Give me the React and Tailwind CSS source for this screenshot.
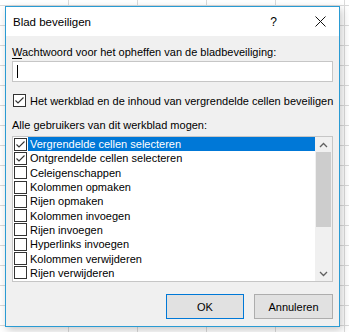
import React from "react";

const items = [
  ["Vergrendelde cellen selecteren", true],
  ["Ontgrendelde cellen selecteren", true],
  ["Celeigenschappen", false],
  ["Kolommen opmaken", false],
  ["Rijen opmaken", false],
  ["Kolommen invoegen", false],
  ["Rijen invoegen", false],
  ["Hyperlinks invoegen", false],
  ["Kolommen verwijderen", false],
  ["Rijen verwijderen", false],
];

function Check({ checked }) {
  return (
    <div className="w-[13px] h-[13px] shrink-0 border border-[#333333] bg-white flex items-center justify-center">
      {checked && (
        <svg width="11" height="11" viewBox="0 0 11 11">
          <polyline points="1.5,5.5 4,8 9.5,2.5" fill="none" stroke="#333333" strokeWidth="1.1" />
        </svg>
      )}
    </div>
  );
}

export default function App() {
  return (
    <div
      className="relative w-[349px] h-[332px] overflow-hidden bg-white bg-[linear-gradient(to_right,#dadada_1px,transparent_1px),linear-gradient(to_bottom,#dadada_1px,transparent_1px)] bg-[length:69px_20px] bg-[position:-1px_5px]"
      style={{ fontFamily: '"Liberation Sans", Arial, sans-serif' }}
    >
      <div className="absolute left-[5px] top-[6px] w-[335px] h-[321px] border border-[#2a9bd3] bg-[#f0f0f0] shadow-[2px_3px_8px_rgba(0,0,0,0.22)] flex flex-col text-[11px] leading-[14px] text-black">
        {/* title bar */}
        <div className="h-[29px] bg-white flex items-center shrink-0">
          <span className="ml-[7px] text-[11.5px]">Blad beveiligen</span>
          <span className="ml-auto mr-[38px] text-[12px]">?</span>
          <svg className="mr-[13px]" width="11" height="11" viewBox="0 0 11 11">
            <path d="M0.5 0.5 L10.5 10.5 M10.5 0.5 L0.5 10.5" stroke="#111" strokeWidth="1" />
          </svg>
        </div>
        <div className="px-[6px] flex flex-col">
          <div className="mt-[9px] h-[15px] leading-[15px] whitespace-nowrap">
            <span className="underline underline-offset-2">W</span>achtwoord voor het opheffen van de bladbeveiliging:
          </div>
          <div className="mt-[1px] h-[21px] border border-[#c6c6c6] bg-white flex items-center">
            <div className="ml-[4px] w-[1px] h-[13px] bg-black" />
          </div>
          <div className="mt-[11px] h-[15px] flex items-center">
            <div className="ml-[1px]"><Check checked /></div>
            <span className="ml-[4px] whitespace-nowrap">Het werkblad en de inhoud van vergrendelde cellen beveiligen</span>
          </div>
          <div className="mt-[10px] h-[15px] leading-[15px] whitespace-nowrap">Alle gebruikers van dit werkblad mogen:</div>
          <div className="mt-[3px] h-[146px] border border-[#c6c6c6] bg-white flex">
            <div className="flex-1 flex flex-col overflow-hidden">
              {items.map(([label, checked], i) => (
                <div key={i} className="h-[14.3px] shrink-0 flex items-center">
                  <div className="ml-[1px]"><Check checked={checked} /></div>
                  <div
                    className={
                      "ml-[1px] flex-1 h-full flex items-center pl-[2px] whitespace-nowrap " +
                      (i === 0 ? "bg-[#0078d7] text-white" : "")
                    }
                  >
                    {label}
                  </div>
                </div>
              ))}
            </div>
            <div className="w-[17px] shrink-0 bg-[#f0f0f0] flex flex-col">
              <div className="h-[15px] flex items-center justify-center">
                <svg width="9" height="6" viewBox="0 0 9 6">
                  <polyline points="1,5 4.5,1.5 8,5" fill="none" stroke="#606060" strokeWidth="1.3" />
                </svg>
              </div>
              <div className="mx-[1px] h-[75px] bg-[#cdcdcd]" />
              <div className="flex-1" />
              <div className="h-[15px] flex items-center justify-center">
                <svg width="9" height="6" viewBox="0 0 9 6">
                  <polyline points="1,1 4.5,4.5 8,1" fill="none" stroke="#606060" strokeWidth="1.3" />
                </svg>
              </div>
            </div>
          </div>
          <div className="mt-[12px] flex justify-end gap-[10px] pr-[0px]">
            <div className="w-[78px] h-[25px] border border-[#0078d7] bg-[#e1e1e1] flex items-center justify-center">OK</div>
            <div className="w-[79px] h-[25px] border border-[#adadad] bg-[#e1e1e1] flex items-center justify-center">Annuleren</div>
          </div>
        </div>
      </div>
    </div>
  );
}
